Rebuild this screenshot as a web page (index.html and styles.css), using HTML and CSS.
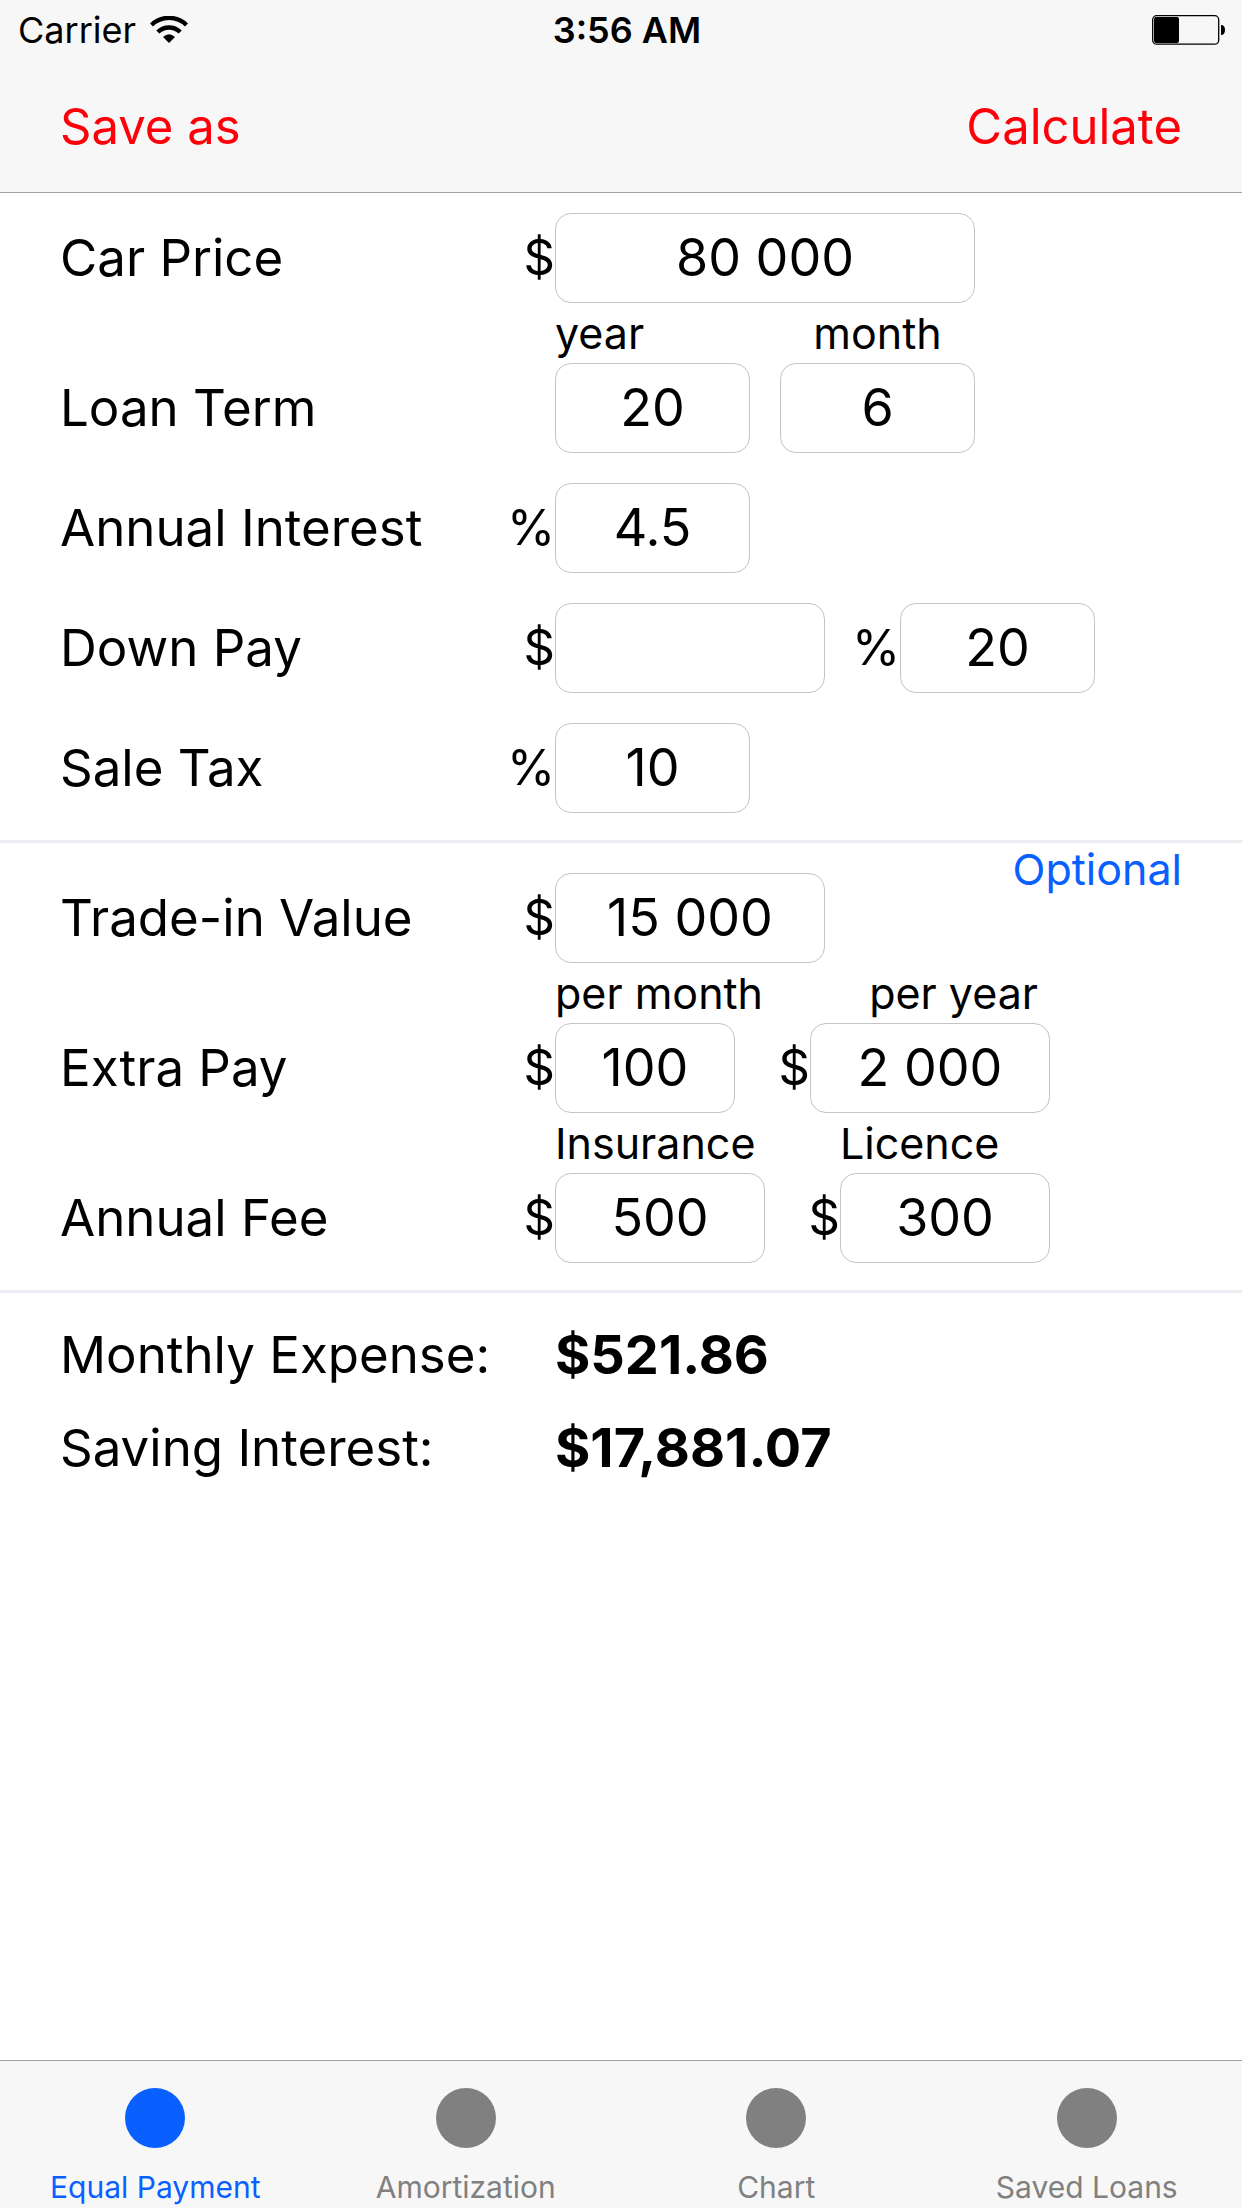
FILE: index.html
```
<!DOCTYPE html>
<html lang="en">

<head>
     <meta charset="UTF-8" />
     <title>Car Loan Calculator</title>
     <meta name="viewport" content="width=device-width, initial-scale=1" />
     <link rel="stylesheet" href="styles.css">
</head>

<body>

     <header>
          <div class="status-bar">
               <div class="carrier">
                    <span>Carrier</span>
                    <svg class="wifi" width="38" height="28" viewBox="0 0 38 28">
                         <path d="M1.5 9 A25 25 0 0 1 36.500 9" fill="none" stroke="#000" stroke-width="4.400" />
                         <path d="M7.800 16 A16 16 0 0 1 30.200 16" fill="none" stroke="#000" stroke-width="4.400" />
                         <path d="M13 21 Q19 15.500 25 21 L19 27 Z" />
                    </svg>
               </div>
               <div class="time">3:56 AM</div>
               <svg class="battery" width="74" height="30" viewBox="0 0 74 30">
                    <rect x="0.700" y="0.700" width="66" height="28.500" rx="4" fill="none" stroke="#000" stroke-width="1.300" />
                    <rect x="2" y="2" width="25" height="26" rx="2" />
                    <path d="M69 10 Q73 10 73 15 Q73 20 69 20 Z" />
               </svg>
          </div>
          <div class="nav-bar">
               <button type="button">Save as</button>
               <button type="submit" form="loanForm">Calculate</button>
          </div>
     </header>

     <main>
          <form id="loanForm" onsubmit="return false">
               <section>
                    <div class="row">
                         <label class="name" for="price">Car Price</label>
                         <span class="unit">$</span>
                         <input class="w-xl" type="text" id="price" value="80 000">
                    </div>
                    <div class="row captioned">
                         <span class="name">Loan Term</span>
                         <span class="unit"></span>
                         <div class="field">
                              <label for="years">year</label>
                              <input class="w-m" type="text" id="years" value="20">
                         </div>
                         <div class="field next">
                              <label class="center" for="months">month</label>
                              <input class="w-m" type="text" id="months" value="6">
                         </div>
                    </div>
                    <div class="row">
                         <label class="name" for="interest">Annual Interest</label>
                         <span class="unit">%</span>
                         <input class="w-m" type="text" id="interest" value="4.5">
                    </div>
                    <div class="row">
                         <label class="name" for="downPay">Down Pay</label>
                         <span class="unit">$</span>
                         <input class="w-l" type="text" id="downPay">
                         <label class="unit" for="downPercent">%</label>
                         <input class="w-m" type="text" id="downPercent" value="20">
                    </div>
                    <div class="row">
                         <label class="name" for="tax">Sale Tax</label>
                         <span class="unit">%</span>
                         <input class="w-m" type="text" id="tax" value="10">
                    </div>
               </section>

               <section class="optional">
                    <div class="row">
                         <label class="name" for="tradeIn">Trade-in Value</label>
                         <span class="unit">$</span>
                         <input class="w-l" type="text" id="tradeIn" value="15 000">
                         <span class="tag">Optional</span>
                    </div>
                    <div class="row captioned">
                         <span class="name">Extra Pay</span>
                         <span class="unit">$</span>
                         <div class="field">
                              <label for="extraMonth">per month</label>
                              <input class="w-xs" type="text" id="extraMonth" value="100">
                         </div>
                         <span class="unit">$</span>
                         <div class="field">
                              <label class="end" for="extraYear">per year</label>
                              <input class="w-ml" type="text" id="extraYear" value="2 000">
                         </div>
                    </div>
                    <div class="row captioned">
                         <span class="name">Annual Fee</span>
                         <span class="unit">$</span>
                         <div class="field">
                              <label for="insurance">Insurance</label>
                              <input class="w-fee" type="text" id="insurance" value="500">
                         </div>
                         <span class="unit">$</span>
                         <div class="field">
                              <label for="licence">Licence</label>
                              <input class="w-fee" type="text" id="licence" value="300">
                         </div>
                    </div>
               </section>
          </form>

          <dl class="results">
               <dt>Monthly Expense:</dt>
               <dd>$521.86</dd>
               <dt>Saving Interest:</dt>
               <dd>$17,881.07</dd>
          </dl>
     </main>

     <nav class="tab-bar">
          <a class="active" href="#equal">Equal Payment</a>
          <a href="#amortization">Amortization</a>
          <a href="#chart">Chart</a>
          <a href="#saved">Saved Loans</a>
     </nav>

</body>

</html>
```
FILE: styles.css
```
:root {
     --blue: #0a60ff;
     --red: #ff000a;
     --gray: #808080;
     --bar: #f7f7f7;
     --bar-line: #a3a3a3;
     --line: #ebebf1;
     --border: #c4c4c4;
}

* {
     box-sizing: border-box;
     margin: 0;
     padding: 0;
}

body {
     display: flex;
     flex-direction: column;
     min-height: 100vh;
     font-family: Inter, "Liberation Sans", sans-serif;
     font-size: 51px;
     background: white;
     color: #000;
}

header {
     background: var(--bar);
     border-bottom: 1px solid var(--bar-line);
}

.status-bar {
     display: grid;
     grid-template-columns: 1fr auto 1fr;
     align-items: center;
     height: 60px;
     padding: 0 6px 0 18px;
     font-size: 36px;
}

.carrier {
     display: flex;
     align-items: center;
     gap: 14px;
}

.time {
     font-weight: 600;
}

.battery {
     justify-self: end;
     margin-right: 10px;
}

.nav-bar {
     display: flex;
     justify-content: space-between;
     align-items: center;
     height: 132px;
     padding: 0 60px;
}

.nav-bar button {
     border: none;
     background: none;
     font: inherit;
     font-size: 49px;
     color: var(--red);
     cursor: pointer;
}

main {
     flex: 1;
}

section {
     padding: 20px 60px 27px;
     border-bottom: 3px solid var(--line);
}

.row {
     display: flex;
     align-items: flex-end;
     line-height: 90px;
     white-space: nowrap;
}

.row + .row {
     margin-top: 30px;
}

.row + .captioned {
     margin-top: 0;
}

.name {
     width: 420px;
}

.unit {
     width: 75px;
     text-align: right;
     font-size: 49px;
}

.row input {
     display: block;
     height: 90px;
     border: 1px solid var(--border);
     border-radius: 16px;
     background: white;
     font: inherit;
     font-size: 52px;
     text-align: center;
     color: #000;
}

.field {
     display: flex;
     flex-direction: column;
}

.field label {
     width: 0;
     min-width: 100%;
     font-size: 43px;
     line-height: 60px;
}

.field .center {
     text-align: center;
}

.field .end {
     padding-right: 12px;
     text-align: right;
}

.next {
     margin-left: 30px;
}

.w-xs {
     width: 180px;
}

.w-m {
     width: 195px;
}

.w-fee {
     width: 210px;
}

.w-ml {
     width: 240px;
}

.w-l {
     width: 270px;
}

.w-xl {
     width: 420px;
}

/* the tag sits in the strip above the first optional row */
.optional {
     padding-top: 0;
}

.optional .row:first-child {
     min-height: 120px;
}

.tag {
     align-self: flex-start;
     margin-left: auto;
     font-size: 43px;
     line-height: 52px;
     color: var(--blue);
}

.results {
     display: grid;
     grid-template-columns: 495px 1fr;
     padding: 15px 60px;
     line-height: 93px;
}

.results dd {
     font-size: 54px;
     font-weight: 700;
}

.tab-bar {
     display: flex;
     border-top: 1px solid var(--bar-line);
     background: var(--bar);
}

.tab-bar a {
     flex: 1;
     padding: 27px 0 2px;
     font-size: 30px;
     line-height: 38px;
     text-align: center;
     text-decoration: none;
     color: var(--gray);
}

.tab-bar a::before {
     content: "";
     display: block;
     width: 60px;
     height: 60px;
     margin: 0 auto 20px;
     border-radius: 50%;
     background: currentColor;
}

.tab-bar .active {
     color: var(--blue);
}
```
